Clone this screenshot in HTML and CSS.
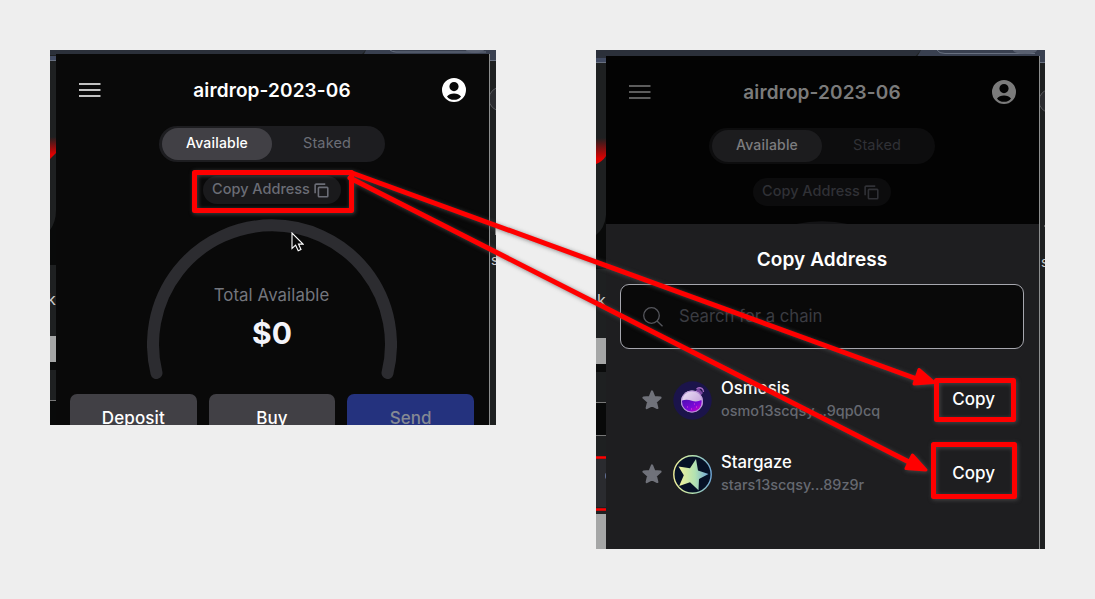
FILE: index.html
```html
<!DOCTYPE html>
<html lang="en">
<head>
<meta charset="utf-8">
<title>Copy Address</title>
<link rel="stylesheet" href="styles.css">
</head>
<body>
<svg class="defs" width="0" height="0" aria-hidden="true">
  <defs>
    <symbol id="menu" viewBox="0 0 22 16"><path d="M0 2h21.500M0 8h21.500M0 14h21.500" stroke="currentColor" stroke-width="1.700"/></symbol>
    <symbol id="user" viewBox="0 0 24 24"><path fill="currentColor" fill-rule="evenodd" d="M12 0a12 12 0 1 1 0 24a12 12 0 0 1 0-24zM12 4a4.600 4.600 0 1 0 0 9.200a4.600 4.600 0 0 0 0-9.200zM5 18.400C6.400 20.500 9 21.800 12 21.800s5.600-1.300 7-3.400C17.500 16.300 15 15.400 12 15.400s-5.500.9-7 3z"/></symbol>
    <symbol id="copy" viewBox="0 0 16 16"><path d="M1.200 11V2.500Q1.200 1.200 2.500 1.200H12" fill="none" stroke="currentColor" stroke-width="1.700"/><rect x="4.700" y="4.700" width="10" height="10" rx=".8" fill="none" stroke="currentColor" stroke-width="1.700"/></symbol>
    <symbol id="star" viewBox="0 0 20 20"><path d="M10 1.500l2.300 5.700 6.200.5-4.700 4.100 1.500 6.200L10 15.200 4.700 18l1.500-6.200L1.500 7.700l6.200-.5z" fill="currentColor" stroke="currentColor" stroke-width="2.200" stroke-linejoin="round"/></symbol>
    <linearGradient id="glow" x1="0" y1="0" x2="0" y2="1"><stop offset="0" stop-color="#1e2021"/><stop offset=".8" stop-color="#e00000"/></linearGradient>
    <linearGradient id="gaze" x1="0" y1="0" x2="1" y2="0"><stop offset="0" stop-color="#f0f09a"/><stop offset=".55" stop-color="#b2e2b2"/><stop offset="1" stop-color="#70a8d8"/></linearGradient>
    <linearGradient id="liquid" x1="0" y1="0" x2="1" y2="1"><stop offset="0" stop-color="#4b10b0"/><stop offset=".55" stop-color="#7a08d8"/><stop offset="1" stop-color="#e000c0"/></linearGradient>
    <linearGradient id="glass" x1="0" y1="0" x2="1" y2="1"><stop offset="0" stop-color="#efe6f8"/><stop offset="1" stop-color="#b68ed0"/></linearGradient>
  </defs>
</svg>
<main class="board">
  <section class="shot shot-home">
    <svg class="backdrop" width="446" height="375">
      <rect width="446" height="375" fill="#1e2021"/>
      <path d="M0 0h316l-5 5H0z" fill="#2b303a"/><path d="M316 0h130v10H311z" fill="#394050"/>
      <path d="M340 0q2 2 6 2h90" stroke="#687080" fill="none"/><ellipse cx="425" cy="0" rx="9" ry="3" fill="#596070"/>
      <path d="M0 6h6v4H0z" fill="#404960"/><path d="M0 10.500h6M440 10.500h6" stroke="#687080"/>
      <path d="M0 87h6v16l-6 6z" fill="url(#glow)"/>
      <path d="M6 160v55H0v-35q6-8 6-20z" fill="#090a0a"/>
      <rect y="286" width="6" height="26" fill="#a5a6a6"/><rect y="312" width="6" height="8" fill="#0a0b0b"/>
      <path d="M0 350.500h6" stroke="#777"/><rect y="351" width="6" height="24" fill="#090a0a"/>
      <circle cx="451" cy="49" r="12" fill="#2b2c30" stroke="#55565a"/>
      <path d="M445.500 178v7" stroke="#888"/>
    </svg>
    <span class="peek peek-k">k</span><span class="peek peek-s">s</span>
    <div class="phone">
      <header class="bar"><svg class="menu"><use href="#menu"/></svg><h1 class="title">airdrop-2023-06</h1><svg class="user"><use href="#user"/></svg></header>
      <div class="tabs"><span class="tab tab-on">Available</span><span class="tab">Staked</span></div>
      <div class="chip"><span>Copy Address</span><svg class="copy"><use href="#copy"/></svg></div>
      <div class="gauge">
        <svg class="arc" viewBox="0 0 250 162"><path d="M9.500 154A119 119 0 1 1 240.500 154" fill="none" stroke="#2c2c30" stroke-width="12" stroke-linecap="round"/></svg>
        <span class="gauge-label">Total Available</span><strong class="gauge-value">$0</strong>
      </div>
      <div class="actions"><span class="action">Deposit</span><span class="action">Buy</span><span class="action action-send">Send</span></div>
    </div>
  </section>
  <section class="shot shot-sheet">
    <svg class="backdrop" width="449" height="499">
      <rect width="449" height="499" fill="#1e2021"/>
      <path d="M0 0h325l-7 8H0z" fill="#2b303a"/><path d="M325 0h124v12H318z" fill="#394050"/>
      <path d="M341 0q2 3.500 8 3.500h90" stroke="#687080" fill="none"/><ellipse cx="429" cy="0" rx="12" ry="4" fill="#596070"/>
      <path d="M0 8h10v4H0z" fill="#404960"/><path d="M0 12.500h10M442 12.500h7" stroke="#687080"/>
      <path d="M0 88h10v18q-4 6-10 8z" fill="url(#glow)"/>
      <path d="M10 165v54H0v-34q9-7 10-20z" fill="#090a0a"/>
      <rect y="288" width="10" height="26" fill="#a5a6a6"/><rect y="314" width="10" height="8" fill="#0a0b0b"/>
      <path d="M0 352h10v33H0z" fill="#080909"/><path d="M0 352.500h10M0 385.500h10" stroke="#777"/>
      <rect y="409" width="10" height="48" fill="#2a2b2f"/><path d="M0 407.500h10M0 459.500h10" stroke="red" stroke-width="2.600"/>
      <ellipse cx="10" cy="426" rx="1" ry="3" fill="#647198"/>
      <rect y="464" width="10" height="35" fill="#a5a6a6"/>
      <circle cx="455" cy="51" r="12" fill="#2b2c30" stroke="#55565a"/><path d="M448 176h1" stroke="#aaa"/>
    </svg>
    <span class="peek peek-k2">k</span><span class="peek peek-s2">s</span>
    <div class="phone phone-dim">
      <div class="dimmed">
        <header class="bar"><svg class="menu"><use href="#menu"/></svg><h1 class="title">airdrop-2023-06</h1><svg class="user"><use href="#user"/></svg></header>
        <div class="tabs"><span class="tab tab-on">Available</span><span class="tab">Staked</span></div>
        <div class="chip"><span>Copy Address</span><svg class="copy"><use href="#copy"/></svg></div>
        <div class="gauge"><svg class="arc" viewBox="0 0 250 162"><path d="M9.500 154A119 119 0 1 1 240.500 154" fill="none" stroke="#2c2c30" stroke-width="12"/></svg></div>
      </div>
      <div class="sheet">
        <h2 class="sheet-title">Copy Address</h2>
        <div class="search"><svg class="lens" viewBox="0 0 20 20"><circle cx="8.500" cy="8.500" r="7.800"/><path d="M14 14l5.500 5.300"/></svg><span>Search for a chain</span></div>
        <div class="chain">
          <svg class="star"><use href="#star"/></svg>
          <svg class="logo" viewBox="0 0 39 39"><circle cx="19.500" cy="19.500" r="19.200" fill="#1b144b"/><path d="M22.500 10l3-3 4.500 5-3 3z" fill="#7845a0"/><path d="M23.500 8q4-3 6.500 1M26 7q4-1 4.500 4" stroke="#a36bc0" stroke-width="1.300" fill="none"/><circle cx="19" cy="20.500" r="11" fill="url(#glass)"/><path d="M8.800 19.500q5-1.500 10 .2t9.700-.7a10 10 0 1 1-19.700.5z" fill="url(#liquid)"/><circle cx="19" cy="20.500" r="10.500" fill="none" stroke="#b590d8" stroke-width=".9"/><path d="M14 26h.8M18 28h.8M23 26h.8M21 23h.8" stroke="#ff58d8"/></svg>
          <div class="chain-text"><span class="chain-name">Osmosis</span><span class="chain-addr addr-osmo">osmo13scqsy...9qp0cq</span></div><span class="copy-btn">Copy</span>
        </div>
        <div class="chain">
          <svg class="star"><use href="#star"/></svg>
          <svg class="logo" viewBox="0 0 39 39"><circle cx="19.500" cy="19.500" r="18.700" fill="#061126" stroke="url(#gaze)" stroke-width="1.400"/><path d="M23 4l2 11.500 10.500 3.500-9.500 5-.5 11.200-8.500-8-10.800 3.800 4.600-10.700L5.500 11.500l11.500 1.700z" fill="url(#gaze)"/></svg>
          <div class="chain-text"><span class="chain-name">Stargaze</span><span class="chain-addr addr-stars">stars13scqsy...89z9r</span></div><span class="copy-btn">Copy</span>
        </div>
      </div>
    </div>
  </section>
  <svg class="marks" width="1095" height="599" viewBox="0 0 1095 599">
    <g fill="none" stroke="red" stroke-width="5" stroke-linejoin="round" stroke-linecap="round">
      <rect x="194.500" y="172.500" width="157" height="38"/>
      <rect x="936.500" y="380.500" width="77" height="39"/>
      <rect x="933.500" y="444.500" width="81" height="52"/>
      <path d="M352 173L917 379M350 178L909 462"/>
    </g>
    <g fill="red" stroke="red" stroke-width="3" stroke-linejoin="round"><path d="M919 369.500L934 382.500 914 384z"/><path d="M912.500 455L926 470 906 468.500z"/></g>
  </svg>
  <svg class="cursor" viewBox="0 0 13 20"><path d="M1 1v15.500l3.600-3.300 2.600 5.500 2.800-1.300-2.500-5.300h4.500z" fill="#090909" stroke="#fff" stroke-width="1.100"/></svg>
</main>
</body>
</html>
```
FILE: styles.css
```css
* { box-sizing: border-box; }
body { margin: 0; background: #eee; font-family: Inter, "Liberation Sans", sans-serif; font-weight: 500; }
h1, h2 { margin: 0; }
.defs { position: absolute; }
.board { position: relative; display: flex; align-items: flex-start; gap: 100px; width: 1095px; height: 599px; padding: 50px; overflow: hidden; }
.shot { position: relative; flex: none; overflow: hidden; }
.shot-home { width: 446px; height: 375px; padding: 4px 0 0 6px; }
.shot-sheet { width: 449px; height: 499px; padding: 6px 0 0 10px; }
.backdrop { position: absolute; left: 0; top: 0; }
.peek { position: absolute; font-size: 16px; line-height: 20px; font-weight: 400; color: #ccc; }
.peek-k { left: -3px; top: 239px; }
.peek-s { left: 441px; top: 200px; font-size: 14px; }
.peek-k2 { left: 1px; top: 240px; }
.peek-s2 { left: 445px; top: 202px; font-size: 14px; }
.phone { position: relative; width: 434px; height: 371px; overflow: hidden; background: #090909; border-right: 1px solid #8c8e8e; display: flex; flex-direction: column; }
.phone-dim { height: 493px; background: #1e1e20; }
.dimmed { flex: none; height: 168px; overflow: hidden; background: #030303; display: flex; flex-direction: column; }
.bar { flex: none; height: 72px; display: flex; align-items: center; justify-content: space-between; padding: 0 23px; color: #fff; }
.menu { width: 22px; height: 16px; }
.user { width: 24px; height: 24px; }
.title { font-size: 19px; line-height: 28px; padding: 1px 0 0 1px; letter-spacing: .12px; font-weight: 600; white-space: nowrap; }
.tabs { flex: none; align-self: center; display: flex; width: 226px; height: 36px; padding: 2px 3px; border-radius: 18px; background: #1d1d20; margin-right: 1px; }
.tab { width: 110px; height: 32px; line-height: 30px; text-align: center; font-size: 14.500px; font-weight: 400; color: #6b6d76; border-radius: 16px; letter-spacing: .15px; }
.tab-on { background: #414045; color: #fff; font-size: 14px; font-weight: 500; letter-spacing: .2px; }
.chip { flex: none; align-self: center; display: flex; align-items: center; justify-content: center; gap: 4px; width: 138px; height: 28px; margin: 14px 2px 0 0; padding: 0 2px 3px 0; border-radius: 14px; background: #1a1a1c; color: #6b6d76; font-size: 14.500px; white-space: nowrap; }
.copy { width: 15px; height: 15px; margin-top: 4px; flex: none; }
.gauge { flex: none; align-self: center; position: relative; width: 250px; height: 175px; margin: 15px 2px 0 0; display: flex; flex-direction: column; align-items: center; padding-top: 64px; color: #74767e; }
.arc { position: absolute; left: 0; top: 0; width: 250px; height: 162px; }
.gauge-label { font-size: 16.800px; line-height: 24px; font-weight: 400; letter-spacing: .1px; }
.gauge-value { font-size: 30px; line-height: 36px; margin: 8px 0 0 1px; font-weight: 700; color: #f4f4fa; }
.actions { flex: none; display: flex; gap: 12px; padding: 0 15px 0 14px; }
.action { flex: 1; height: 48px; line-height: 48px; border-radius: 7px; background: #414045; color: #fff; text-align: center; font-size: 17px; letter-spacing: .1px; }
.action-send { background: #24327e; color: #858993; }
.dimmed .bar { color: #7b7b7b; }
.dimmed .tabs { background: #0d0d0e; }
.dimmed .tab { color: #303136; }
.dimmed .tab-on { background: #1c1c1e; color: #7d7d7f; }
.dimmed .chip { background: #0c0c0d; color: #303136; }
.dimmed .arc { opacity: .4; }
.sheet { display: flex; flex-direction: column; padding: 20px 15px 0 14px; color: #fff; }
.sheet-title { text-align: center; font-size: 19px; line-height: 30px; padding-top: 1px; margin-bottom: -1px; letter-spacing: .1px; font-weight: 600; }
.search { display: flex; align-items: center; gap: 16px; height: 65px; margin-top: 10px; padding: 0 0 1px 22px; border: 1px solid #a6a7ae; border-radius: 9px; background: #090909; color: #3b3c42; font-size: 16.700px; font-weight: 400; }
.lens { width: 20px; height: 20px; margin-top: 2px; fill: none; stroke: #55565c; stroke-width: 1.300; }
.chain { display: flex; align-items: center; height: 74px; padding: 0 29px 0 22px; }
.search + .chain { margin-top: 14px; }
.star { width: 20px; height: 20px; color: #70727a; }
.logo { width: 39px; height: 39px; margin-left: 11px; }
.chain-text { display: flex; flex-direction: column; margin: -1px 0 0 9px; flex: 1; }
.chain-name { font-size: 16.700px; line-height: 23px; }
.chain-addr { font-size: 14.400px; line-height: 22px; color: #666971; }
.copy-btn { font-size: 17px; line-height: 24px; margin-top: -2px; }
.marks { position: absolute; left: 0; top: 0; filter: drop-shadow(1px 1px 2px rgba(90,90,90,.7)); }
.cursor { position: absolute; left: 291px; top: 232px; width: 13px; height: 20px; }
```
